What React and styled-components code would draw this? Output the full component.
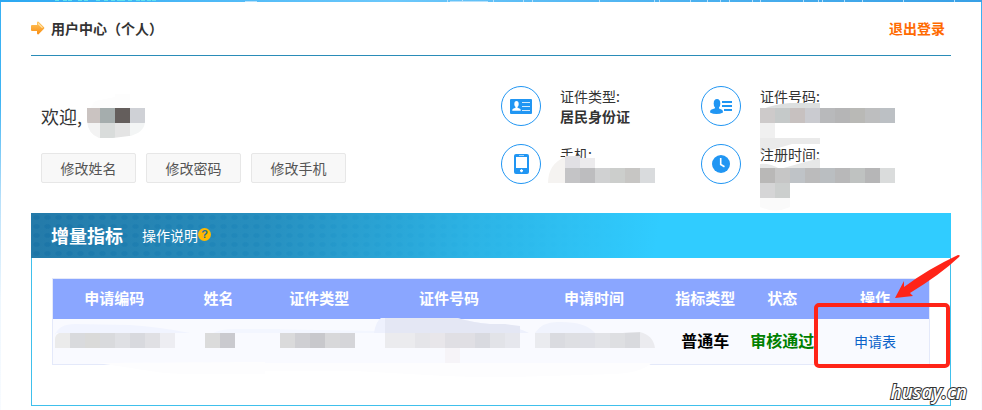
import React from 'react'
import styled, { createGlobalStyle } from 'styled-components'

const accountButtons = ['修改姓名', '修改密码', '修改手机']

const columns = [
    { title: '申请编码', width: '14%' },
    { title: '姓名', width: '9.8%' },
    { title: '证件类型', width: '13.2%' },
    { title: '证件号码', width: '16.4%' },
    { title: '申请时间', width: '16.7%' },
    { title: '指标类型', width: '8.7%' },
    { title: '状态', width: '8.9%' },
    { title: '操作', width: '12.3%' }
]

const circuitTicks = [447, 462, 493, 523, 532, 599, 654, 659, 690, 707, 720, 729, 752, 760, 803, 818, 822, 844, 862, 903, 954]
const circuitDots = [55, 63, 68, 78, 84, 96, 104, 111, 117, 121, 128, 136, 141, 147, 152]

// every tile is one 15px square, the list runs from left to right
const Tiles = ({ x = 0, y = 0, colors }) => (
    <g shapeRendering="crispEdges">
        {colors.map((color, i) => (
            <rect key={i} x={x + i * 15} y={y} width="15" height="15" fill={color} />
        ))}
    </g>
)

const Circuit = () => (
    <CircuitStrip viewBox="0 0 982 2" preserveAspectRatio="none" aria-hidden="true">
        {circuitTicks.map(x => <rect key={x} x={x} width="1" height="2" fill="#b5e0fb" />)}
        {circuitDots.map(x => <rect key={x} x={x} width="4" height="1" fill="#5fe0f0" />)}
        <path d="M245 1.500h12M450 1.500h38" stroke="#b5e0fb" />
    </CircuitStrip>
)

const ArrowIcon = () => (
    <svg width="14" height="14" viewBox="0 0 14 14" aria-hidden="true">
        <defs>
            <linearGradient id="arrowFill" x1="0" y1="0" x2="0" y2="1">
                <stop offset="0" stopColor="#ffc861" />
                <stop offset="1" stopColor="#f98d12" />
            </linearGradient>
        </defs>
        <path d="M1 4h5V1.400Q6.400.2 7.600.8L13 6.200q.8.8 0 1.600L7.600 13.200Q6.400 13.800 6 12.600V10H1Q0 10 0 9v-4Q0 4 1 4z" fill="url(#arrowFill)" />
        <path d="M7 2.500l4.500 4.200" stroke="#ffe2a8" strokeWidth="1.200" fill="none" />
    </svg>
)

const CardIcon = () => (
    <svg width="22" height="15" viewBox="0 0 22 15" aria-hidden="true">
        <rect width="22" height="15" rx="1" fill="#2196f3" />
        <ellipse cx="6.500" cy="5" rx="2.200" ry="3" fill="#fff" />
        <path d="M5.500 7h2v1.800l2.500 1q.8.500.8 2H2.200q0-1.500.8-2l2.500-1z" fill="#fff" />
        <path d="M12 3.500h8M12 7.500h8M12 11.500h8" stroke="#d3eafd" />
    </svg>
)

const PersonIcon = () => (
    <svg width="22" height="15" viewBox="0 0 22 15" aria-hidden="true">
        <ellipse cx="7" cy="4.500" rx="3.300" ry="4.500" fill="#2196f3" />
        <path d="M5 7h4v2.500l3 1.300q1 .8 1 2.700-3 1.500-6.500 1.500T0 13.500q0-1.900 1-2.700l4-1.600z" fill="#2196f3" />
        <path d="M12 3h10M12 7h10M14 11h8" stroke="#2196f3" strokeWidth="2" />
    </svg>
)

const PhoneIcon = () => (
    <svg width="15" height="20" viewBox="0 0 15 20" aria-hidden="true">
        <rect width="15" height="20" rx="2" fill="#2196f3" />
        <path d="M2 3h11v11H2z" fill="#fff" />
        <path d="M5 1.500h5" stroke="#9bd0fa" />
        <path d="M7.500 15.200v3M6 16.700h3" stroke="#fff" strokeWidth="1.400" />
    </svg>
)

const ClockIcon = () => (
    <svg width="18" height="18" viewBox="0 0 18 18" aria-hidden="true">
        <circle cx="9" cy="9" r="9" fill="#2196f3" />
        <path d="M8.700 3v6.500l3.800 2.300" stroke="#fff" strokeWidth="1.600" fill="none" />
    </svg>
)

const NameMosaic = () => (
    <svg width="60" height="45" viewBox="0 0 60 45" aria-hidden="true">
        <clipPath id="nameShape">
            <path d="M2 15H60V29Q59 40 44 43L28 45H14Q3 41 2 28z" />
        </clipPath>
        <path d="M10 8L30 4V1h15v14H6z" fill="#fdfdfd" />
        <g clipPath="url(#nameShape)">
            <Tiles y={15} colors={['#cac3c1', '#a5adad', '#645e5c', '#cfd1d6']} />
            <Tiles y={30} colors={['#f3f3f3', '#d9dcdb', '#e4e4e4', '#f3f5f5']} />
        </g>
    </svg>
)

const PhoneMosaic = () => (
    <svg width="107" height="27" viewBox="0 0 107 27" aria-hidden="true">
        <path d="M0 27Q0 8 17 1V27z" fill="#f5f3f1" />
        <path d="M17 0h15v12H17z" fill="#e1e0e4" />
        <path d="M32 2h15v10H32z" fill="#ecebed" />
        <Tiles x={17} y={12} colors={['#c4c4c6', '#bdbdbf', '#d0d1d2', '#cccecc', '#c7c6c4', '#d9dbdd']} />
    </svg>
)

const NumberMosaic = () => (
    <svg width="135" height="50" viewBox="0 0 135 50" aria-hidden="true">
        <path d="M0 7Q15 1 30 0H60V7z" fill="#dcdfdf" />
        <Tiles y={5} colors={['#cdcaca', '#c5c9c9', '#c7c1c0', '#cacbd0', '#b8b9bb', '#b5b5b6', '#b9b9b6', '#bdbebf', '#bcc0c4']} />
        <path d="M0 20h15v15H0z" fill="#f0f0f0" />
        <path d="M0 35H60v6H32L15 46 0 49z" fill="#eaeaea" />
    </svg>
)

const DateMosaic = () => (
    <svg width="135" height="53" viewBox="0 0 135 53" aria-hidden="true">
        <path d="M0 6Q10 5 20 11L45 4 60 0V11H0z" fill="#e7e8e8" />
        <Tiles y={10} colors={['#b9b8b7', '#c6c6c6', '#bfc3c7', '#bbbbbc', '#babec1', '#b8b8b9', '#bfc2c1', '#b6b6b7', '#dadcdc']} />
        <Tiles y={25} colors={['#d5d5d6', '#cccfce']} />
        <path d="M0 40h30v9Q15 56 0 49z" fill="#fafafa" />
    </svg>
)

const CodeTiles = () => (
    <TileStrip width="122" height="15" viewBox="-2 0 122 15" aria-hidden="true">
        <path d="M0 2Q4-9 20-9L75-8Q105-6 135 0H0z" fill="#f1f4ff" />
        <path d="M42 30Q70 34 95 38T160 41H210V29z" fill="#fdfdfe" />
        <path d="M0 15V6Q0 2 4 0H15V15z" fill="#ebebeb" />
        <Tiles x={15} colors={['#d9dadd', '#dadad9', '#d9dadd', '#dfe0e4', '#d8d9de', '#e0e0e4', '#ededf2']} />
    </TileStrip>
)

const NameTiles = () => (
    <TileStrip width="32" height="15" viewBox="-2 0 32 15" aria-hidden="true">
        <path d="M8 0Q16-4 30-4H75V0z" fill="#f3f6ff" />
        <Tiles colors={['#dbdbdb', '#cacacf']} />
    </TileStrip>
)

const TypeTiles = () => (
    <TileStrip width="79" height="15" viewBox="0 0 79 15" aria-hidden="true">
        <path d="M-18 0V-4L95-2V0z" fill="#f3f6ff" />
        <path d="M-76 30H100V38H-30L-76 41z" fill="#fdfdfe" />
        <Tiles colors={['#dadadb', '#cfcfd3', '#c8c8cc', '#d8d8da', '#d5d5d9']} />
    </TileStrip>
)

const IdTiles = () => (
    <TileStrip width="143" height="15" viewBox="-8 0 143 15" aria-hidden="true">
        <path d="M-11 0Q-9-12-4-15H72Q90-10 105-9 130-7 144 0z" fill="#eef1fd" />
        <path d="M0-15H72Q90-10 105-9H120L135-7V0H0z" fill="#e4e7f4" />
        <path d="M-30 30H175V41Q120 46 60 43L-30 38z" fill="#fdfdfe" />
        <Tiles colors={['#ebebee', '#ebebee', '#e5e5e9', '#e8e6ea', '#e0dfe4', '#e0dfe4', '#d9dae0', '#e2e3e8', '#e6e7ed']} />
        <Tiles x={60} y={15} colors={['#f6f4f8']} />
    </TileStrip>
)

const TimeTiles = () => (
    <TileStrip width="122" height="15" viewBox="-2 0 122 15" aria-hidden="true">
        <path d="M0 0Q7-11 22-11 50-12 60 0z" fill="#f0f3fd" />
        <path d="M-20 30H117Q105 40 80 41L-20 44z" fill="#fdfdfe" />
        <path d="M60 2Q85 0 105-1V2z" fill="#dedfe3" />
        <Tiles colors={['#eaebef', '#dadbe0', '#dedfe3', '#dedfe5', '#e2e3e7', '#dedfe2', '#d9dade']} />
        <path d="M105-1Q118 2 120 15H105z" fill="#ebebef" />
    </TileStrip>
)

const Pointer = () => (
    <PointerDrawing width="147" height="114" viewBox="0 0 147 114" aria-hidden="true">
        <rect x="3" y="51" width="132" height="61" rx="3" fill="none" stroke="#ff2418" strokeWidth="4" />
        <path d="M82 44L91 27 91 33Q115 15 145 1 148 1 146 3 128 20 97 39L100 42z" fill="#ff2418" />
    </PointerDrawing>
)

const Info = ({ icon, label, value, mosaic }) => (
    <InfoItem>
        <IconRing>{icon}</IconRing>
        <InfoText>
            <dt>{label}</dt>
            {value && <dd>{value}</dd>}
            {mosaic}
        </InfoText>
    </InfoItem>
)

class UserCenter extends React.Component {

    render() {
        return (
            <Page>
                <GlobalStyle />
                <Circuit />
                <Sheet>
                    <TopBar>
                        <ArrowIcon />
                        <PageTitle>用户中心（个人）</PageTitle>
                        <Logout href="#logout">退出登录</Logout>
                    </TopBar>
                    <Profile>
                        <div>
                            <Welcome>
                                欢迎,
                                <Cover $left="44px" $top="-11px"><NameMosaic /></Cover>
                            </Welcome>
                            <ButtonRow>
                                {accountButtons.map(text => <EditButton key={text} type="button">{text}</EditButton>)}
                            </ButtonRow>
                        </div>
                        <InfoGrid>
                            <Info icon={<CardIcon />} label="证件类型:" value="居民身份证" />
                            <Info icon={<PersonIcon />} label="证件号码:" mosaic={<Cover $left="0" $top="17px"><NumberMosaic /></Cover>} />
                            <Info icon={<PhoneIcon />} label="手机:" mosaic={<Cover $left="-12px" $top="12px"><PhoneMosaic /></Cover>} />
                            <Info icon={<ClockIcon />} label="注册时间:" mosaic={<Cover $left="0" $top="14px"><DateMosaic /></Cover>} />
                        </InfoGrid>
                    </Profile>
                    <Panel>
                        <PanelHeader>
                            <PanelTitle>增量指标</PanelTitle>
                            <HelpLink href="#help">操作说明<HelpMark>?</HelpMark></HelpLink>
                        </PanelHeader>
                        <PanelBody>
                            <Table>
                                <colgroup>
                                    {columns.map(col => <Column key={col.title} $width={col.width} />)}
                                </colgroup>
                                <thead>
                                    <tr>{columns.map(col => <HeadCell key={col.title} scope="col">{col.title}</HeadCell>)}</tr>
                                </thead>
                                <tbody>
                                    <tr>
                                        <Cell><CodeTiles /></Cell>
                                        <Cell><NameTiles /></Cell>
                                        <Cell><TypeTiles /></Cell>
                                        <Cell><IdTiles /></Cell>
                                        <Cell><TimeTiles /></Cell>
                                        <Cell $color="#000">普通车</Cell>
                                        <Cell $color="#008000">审核通过</Cell>
                                        <Cell><FormLink href="#form">申请表</FormLink></Cell>
                                    </tr>
                                </tbody>
                            </Table>
                        </PanelBody>
                        <Pointer />
                        <Watermark>husay.cn</Watermark>
                    </Panel>
                </Sheet>
            </Page>
        )
    }
}

export default UserCenter

const GlobalStyle = createGlobalStyle`
    * {
        box-sizing: border-box;
    }
    body {
        margin: 0;
        color: #333;
        font: 14px/20px "Noto Sans CJK SC", sans-serif;
    }
    svg {
        display: block;
    }
    a {
        text-decoration: none;
    }
`

const Page = styled.div`
    position: relative;
    display: flex;
    min-height: 100vh;
    padding: 2px 1px 0;
    background:
        linear-gradient(90deg, #2ba8f2, #6cc8fb 40%, #4fb4f1 65%, #38a0e6) top / 100% 2px no-repeat,
        linear-gradient(#38b0f3, #3fb4f3 100px, #b8e0fa 200px, #eef7fe 300px, #f8fbff);
`

const CircuitStrip = styled.svg`
    position: absolute;
    left: 0;
    top: 0;
    width: 100%;
    height: 2px;
`

const Sheet = styled.main`
    flex: 1;
    min-width: 0;
    padding: 0 30px 4px;
    background: #fff;
`

const TopBar = styled.header`
    display: flex;
    align-items: center;
    height: 54px;
    padding: 0 6px 2px 0;
    border-bottom: 1px solid #2a8cb8;
`

const PageTitle = styled.h1`
    flex: 1;
    margin: 0 0 0 6px;
    font-size: 14px;
`

const Logout = styled.a`
    color: #ff6a00;
    font-weight: bold;
`

const Profile = styled.section`
    display: flex;
    flex-wrap: wrap;
    justify-content: space-between;
    padding: 30px 0 29px 10px;
`

const Welcome = styled.p`
    position: relative;
    margin: 18px 0 0;
    font-size: 18px;
    line-height: 24px;
`

const Cover = styled.span`
    position: absolute;
    left: ${props => props.$left};
    top: ${props => props.$top};
`

const ButtonRow = styled.div`
    display: flex;
    gap: 10px;
    margin-top: 25px;
`

const EditButton = styled.button`
    width: 95px;
    height: 30px;
    padding: 0;
    border: 1px solid #e7e7e7;
    border-radius: 2px;
    background: #f8f8f8;
    color: #555;
    font: inherit;
    cursor: pointer;
`

const InfoGrid = styled.dl`
    display: grid;
    grid-template-columns: 200px 250px;
    row-gap: 18px;
    margin: 0;
`

const InfoItem = styled.div`
    display: flex;
    gap: 19px;
`

const IconRing = styled.span`
    display: flex;
    align-items: center;
    justify-content: center;
    width: 40px;
    height: 40px;
    border: 1px solid #2196f3;
    border-radius: 50%;
`

const InfoText = styled.div`
    position: relative;

    dd {
        margin: 0;
        font-weight: bold;
    }
`

const Panel = styled.section`
    position: relative;
    border: 1px solid #40c0ec;
    border-top: 0;
`

const PanelHeader = styled.header`
    display: flex;
    align-items: center;
    gap: 19px;
    height: 45px;
    margin: 0 -1px;
    padding: 0 0 2px 20px;
    background:
        linear-gradient(100deg, rgba(48, 204, 255, 0), rgba(48, 204, 255, 0.25) 25%, rgba(48, 204, 255, 0.7) 48%, #30ccff 68%),
        radial-gradient(ellipse 4px 3px, #1c74a6 60%, transparent) 0 0 / 11px 9px,
        #247aa9;
`

const PanelTitle = styled.h2`
    margin: 0;
    color: #fff;
    font-size: 18px;
    line-height: 24px;
`

const HelpLink = styled.a`
    display: flex;
    align-items: center;
    color: #fff;
`

const HelpMark = styled.span`
    width: 13px;
    height: 13px;
    border-radius: 50%;
    background: #ffb900;
    color: #1f6f96;
    font: bold 11px/13px "Liberation Sans", sans-serif;
    text-align: center;
`

const PanelBody = styled.div`
    padding: 20px 20px 40px;
`

const Table = styled.table`
    width: 100%;
    border: 1px solid #e4e9fa;
    border-spacing: 0;
    table-layout: fixed;
    background: #f9faff;
`

const Column = styled.col`
    width: ${props => props.$width};
`

const HeadCell = styled.th`
    height: 40px;
    padding: 0 0 2px;
    background: #8aa6ff;
    color: #fff;
    font-size: 15px;
`

const Cell = styled.td`
    height: 45px;
    padding: 0 0 3px;
    color: ${props => props.$color || '#333'};
    font-size: 16px;
    font-weight: bold;
    text-align: center;
    white-space: nowrap;
`

const TileStrip = styled.svg`
    margin: 0 auto;
    overflow: visible;
`

const FormLink = styled.a`
    color: #0a62c9;
    font-size: 14px;
    font-weight: normal;
`

const PointerDrawing = styled.svg`
    position: absolute;
    right: -10px;
    top: 41px;
    pointer-events: none;
`

const Watermark = styled.span`
    position: absolute;
    right: -17px;
    bottom: 1px;
    color: #fff;
    font: italic 600 19px/24px "Open Sans", sans-serif;
    -webkit-text-stroke: 2px #333;
    paint-order: stroke fill;
`
